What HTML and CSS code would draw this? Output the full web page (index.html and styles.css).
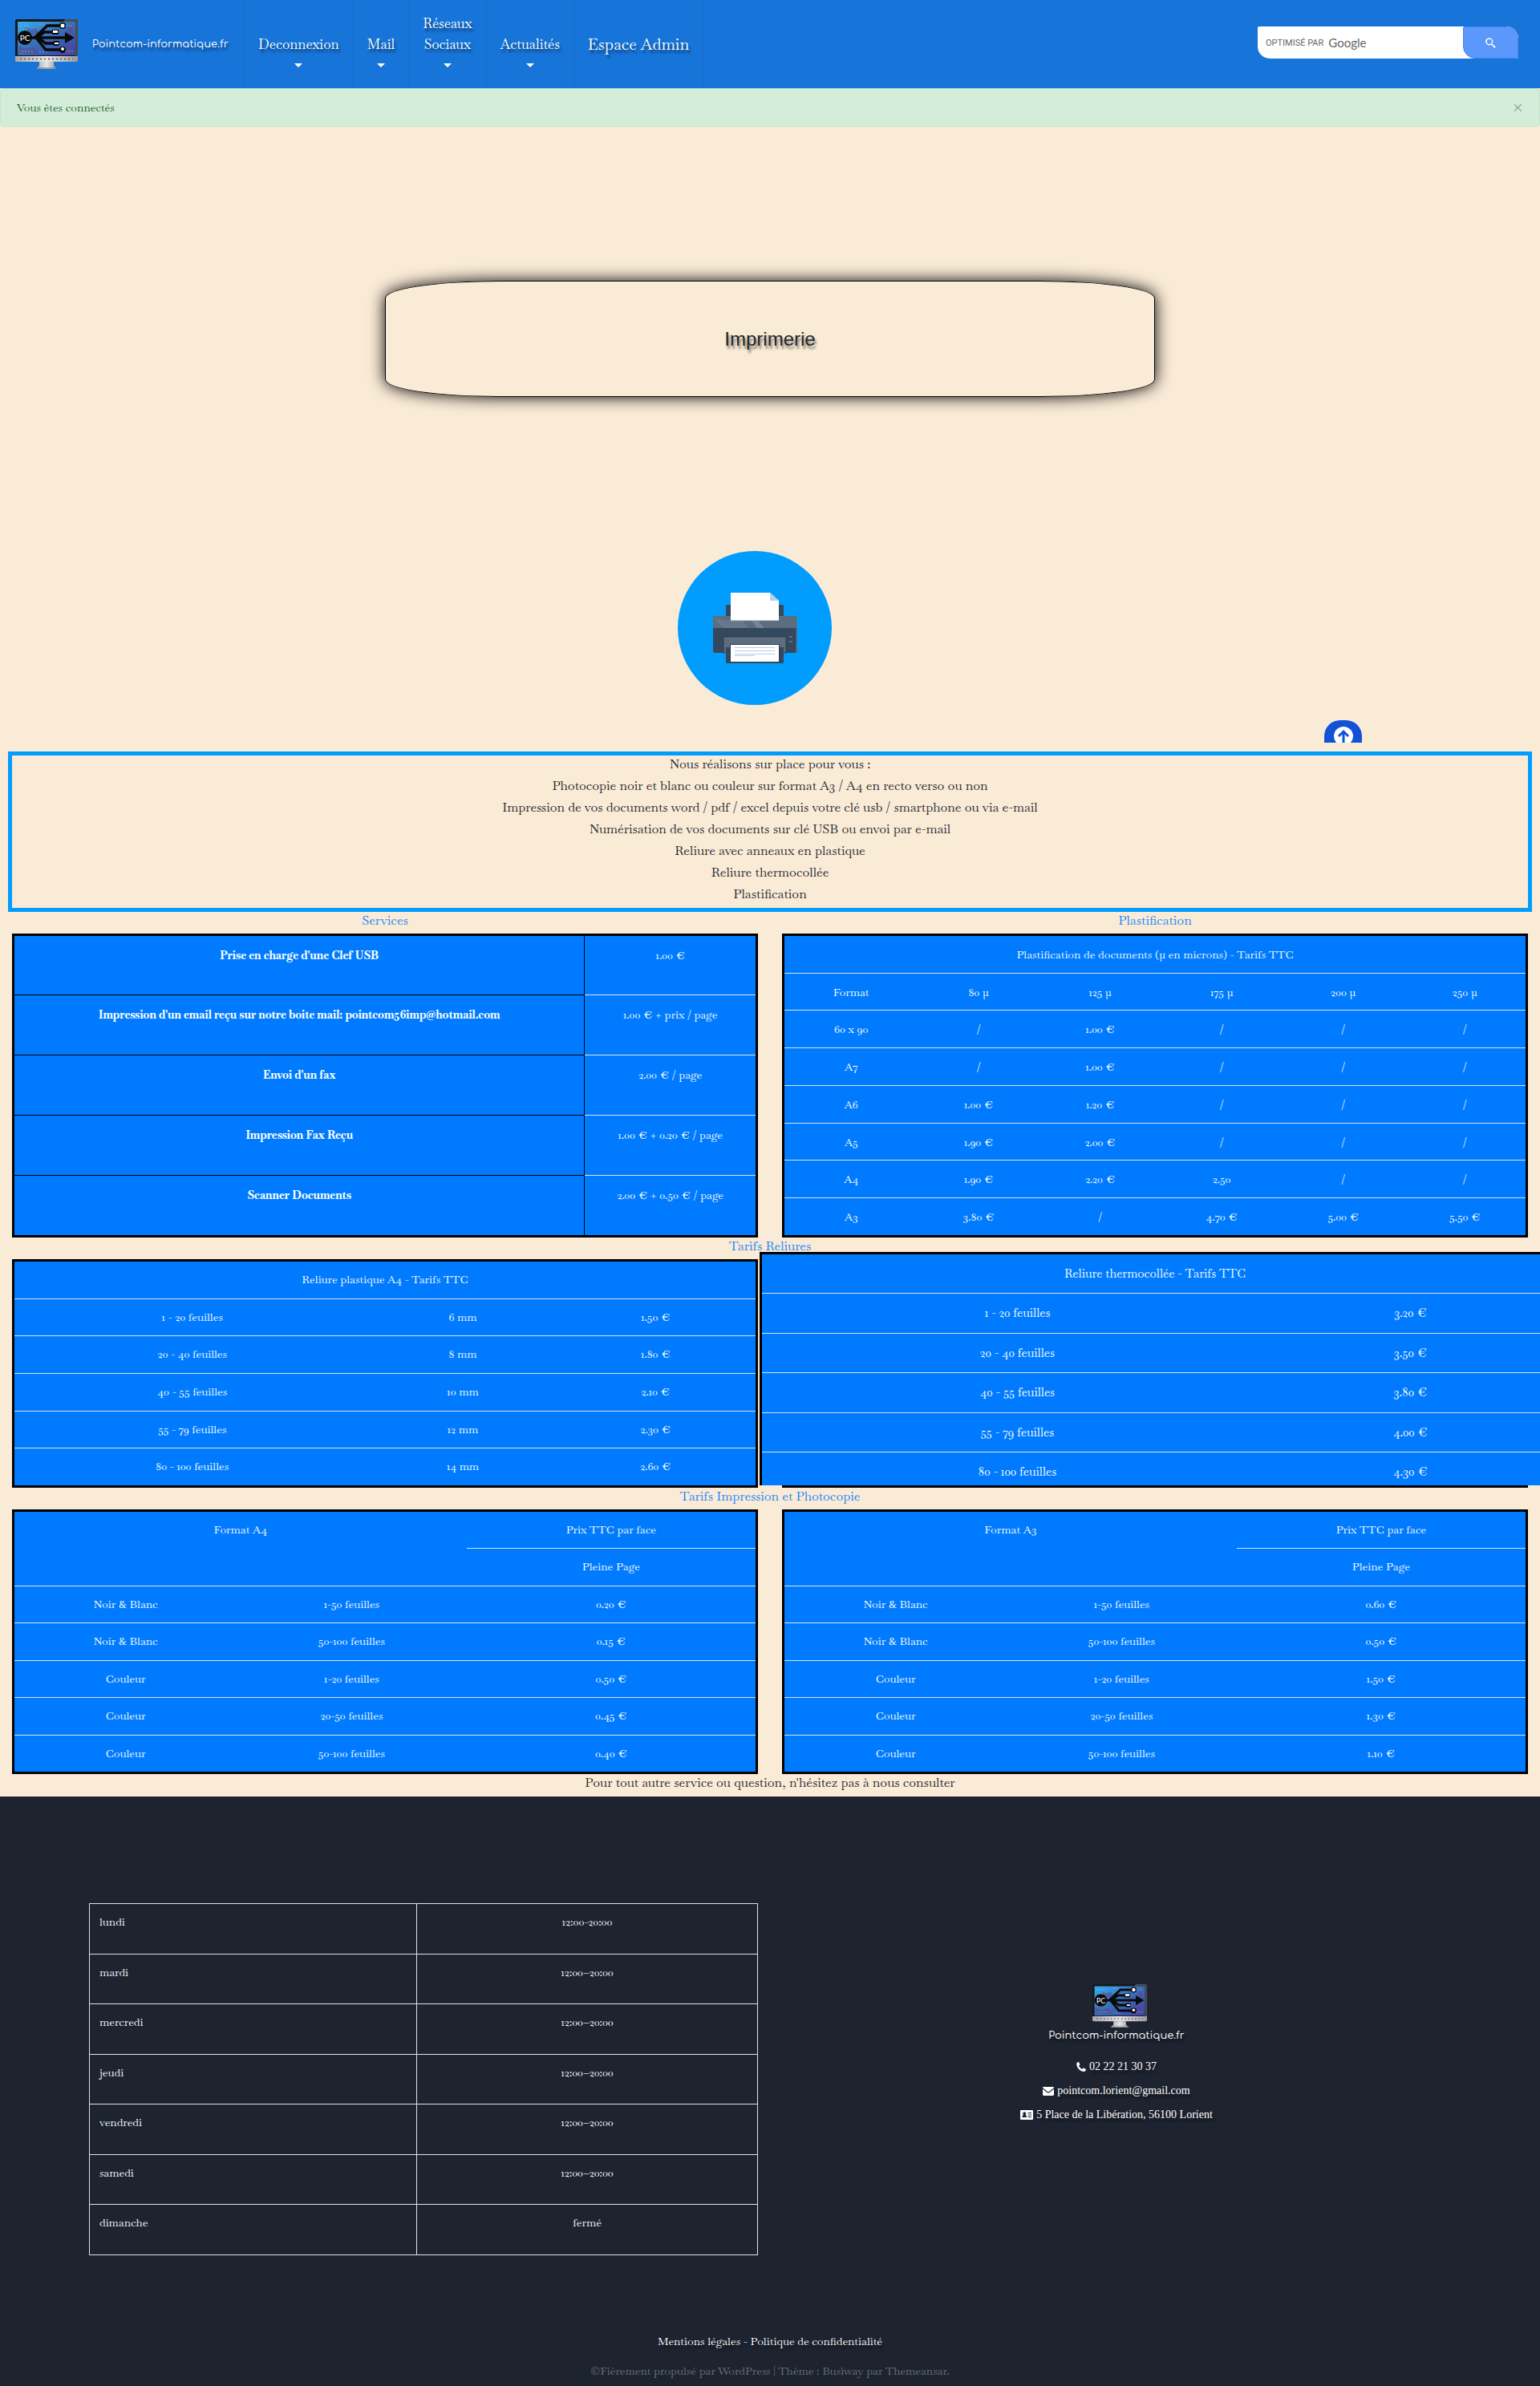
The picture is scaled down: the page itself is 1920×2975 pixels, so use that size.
FILE: index.html
```html
<!DOCTYPE html>
<html lang="fr">
<head>
<meta charset="utf-8">
<meta name="viewport" content="width=device-width, initial-scale=1">
<title>Imprimerie - Pointcom-informatique.fr</title>
<link rel="stylesheet" href="styles.css">
</head>
<body>
<svg class="defs" width="0" height="0" aria-hidden="true">
  <defs>
    <linearGradient id="screen" x1="0" y1="0" x2="1" y2="1">
      <stop offset="0" stop-color="#35aef0"/><stop offset=".5" stop-color="#3a6db5"/><stop offset="1" stop-color="#3f3fa8"/>
    </linearGradient>
    <linearGradient id="metal" x1="0" y1="0" x2="1" y2="0">
      <stop offset="0" stop-color="#a9a9ab"/><stop offset=".5" stop-color="#e6e6e8"/><stop offset="1" stop-color="#9b9b9e"/>
    </linearGradient>
    <symbol id="logo" viewBox="0 0 78 62" preserveAspectRatio="none">
      <rect x="0" y="0" width="78" height="48" rx="2" fill="#16181c"/>
      <path d="M62 0h14a2 2 0 0 1 2 2v44H75V3H60z" fill="#4a4c50"/>
      <rect x="3" y="3" width="72" height="42" fill="url(#screen)"/>
      <path d="M4 33l10 4 8-3 6 8H4zM12 10l8 3 6-2 4 6-9 3zM64 10h8v8h-6zM64 32l8 3v8H60z" fill="#5a4a8c" opacity=".6"/>
      <path d="M7 8h12M9 13h8M30 6h8M60 8h12M62 40h10M30 41h12M8 40h14" stroke="#7fd0ff" stroke-width="1" stroke-dasharray="2 2" opacity=".7"/>
      <path d="M16 23H66M24 23L40 8H58M26 23L38 38H58M27 23L36 16H50M28 23L38 30H50" fill="none" stroke="#0a0a0c" stroke-width="3.5"/>
      <path d="M62 16l12 7-12 7z" fill="#0a0a0c"/>
      <circle cx="12" cy="23" r="9" fill="#0a0a0c"/>
      <circle cx="59" cy="8" r="4" fill="#0a0a0c"/><circle cx="59" cy="8" r="2.5" fill="#fff"/>
      <rect x="46" y="13" width="8" height="6" fill="#0a0a0c"/><rect x="47" y="14" width="6" height="3" fill="#fff"/>
      <rect x="47" y="27" width="8" height="6" rx="2" fill="#0a0a0c"/><rect x="49" y="29" width="5" height="2" fill="#fff"/>
      <circle cx="59" cy="38" r="4" fill="#0a0a0c"/><circle cx="59" cy="37" r="2" fill="#fff"/>
      <text x="12" y="27" font-family="Lato, sans-serif" font-size="10" text-anchor="middle" fill="#fff">PC</text>
      <path d="M0 46h78v5a2 2 0 0 1-2 2H2a2 2 0 0 1-2-2z" fill="url(#metal)"/>
      <path d="M6 49.500h66" stroke="#55565a" stroke-width="1.500" stroke-dasharray="2 3"/>
      <path d="M30 53h18v5l4 4H26l4-4z" fill="url(#metal)"/>
      <path d="M26 61h26" stroke="#6b6c70"/>
    </symbol>
  </defs>
</svg>

<header class="topbar">
  <a class="brand" href="#">
    <svg class="brand-logo" aria-hidden="true"><use href="#logo"/></svg>
    <span class="brand-name">Pointcom-informatique.fr</span>
  </a>
  <nav class="menu">
    <a class="menu-item" href="#"><span>Deconnexion</span><i class="caret"></i></a>
    <a class="menu-item" href="#"><span>Mail</span><i class="caret"></i></a>
    <a class="menu-item" href="#"><span>Réseaux<br>Sociaux</span><i class="caret"></i></a>
    <a class="menu-item" href="#"><span>Actualités</span><i class="caret"></i></a>
    <a class="menu-item menu-admin" href="#">Espace Admin</a>
  </nav>
  <form class="search">
    <label class="search-field"><span class="search-by">OPTIMISÉ PAR</span><span class="search-brand">Google</span><input type="text" aria-label="Recherche"></label>
    <button class="search-button" type="button" aria-label="Rechercher">
      <svg width="13" height="13" viewBox="0 0 13 13"><path d="M4.800.2a4.600 4.600 0 1 0 2.800 8.200l.4.400v.7l3.500 3.500 1.300-1.300-3.500-3.500h-.8l-.4-.4A4.600 4.600 0 0 0 4.800.2zm0 1.500a3.100 3.100 0 1 1 0 6.200 3.100 3.100 0 0 1 0-6.200z" fill="#fff"/></svg>
    </button>
  </form>
</header>

<div class="alert" role="alert">
  <span>Vous êtes connectés</span>
  <button class="alert-close" type="button" aria-label="Fermer">×</button>
</div>

<main>
  <section class="hero">
    <h1 class="hero-title">Imprimerie</h1>
  </section>

  <div class="picture">
    <svg width="192" height="192" viewBox="0 0 192 192" role="img" aria-label="Imprimante">
      <circle cx="96" cy="96" r="96" fill="#009dff"/>
      <rect x="60" y="67" width="72" height="24" rx="2" fill="#34495e"/>
      <rect x="44" y="81" width="104" height="46" rx="2" fill="#34495e"/>
      <path d="M46 81h100a2 2 0 0 1 2 2v13H44V83a2 2 0 0 1 2-2z" fill="#5d6d7e"/>
      <path d="M45 84l12 12h32l-8-9H66z" fill="#67788c"/>
      <path d="M92 87h8l8 9h-9z" fill="#75859a"/>
      <path d="M66 52h49l11 10v25H66z" fill="#fff"/>
      <path d="M115 52l11 10h-11z" fill="#b9d0ea"/>
      <path d="M66 87h60" stroke="#7f8c9b"/>
      <rect x="57" y="107" width="78" height="20" fill="#5d6d7e" stroke="#2c3e50"/>
      <rect x="60" y="120" width="72" height="20" rx="1" fill="#34495e"/>
      <path d="M65 116h62v22H65z" fill="#2c3e50"/>
      <path d="M66 117h60v21H66z" fill="#fff"/>
      <path d="M71 120.500h50M71 124.500h50M71 128.500h50M71 130.500h25" stroke="#b5cdea"/>
      <path d="M139 107h4M139 113h4" stroke="#5d6d7e" stroke-width="2"/>
      <path d="M148 83v43" stroke="#7b6258"/>
    </svg>
  </div>

  <div class="totop-row">
    <a class="totop" href="#" aria-label="Haut de page">
      <svg width="24" height="24" viewBox="0 0 24 24"><circle cx="12" cy="12" r="12" fill="#fff"/><path d="M12 20V6M6 12l6-6 6 6" fill="none" stroke="#1152d6" stroke-width="3"/></svg>
    </a>
  </div>

  <section class="intro">
    <p>Nous réalisons sur place pour vous :</p>
    <p>Photocopie noir et blanc ou couleur sur format A3 / A4 en recto verso ou non</p>
    <p>Impression de vos documents word / pdf / excel depuis votre clé usb / smartphone ou via e-mail</p>
    <p>Numérisation de vos documents sur clé USB ou envoi par e-mail</p>
    <p>Reliure avec anneaux en plastique</p>
    <p>Reliure thermocollée</p>
    <p>Plastification</p>
  </section>

  <div class="pair">
    <section>
      <h2 class="heading">Services</h2>
      <table class="prices services">
        <colgroup><col class="w77"><col></colgroup>
        <tr><th>Prise en charge d'une Clef USB</th><td>1.00 €</td></tr>
        <tr><th>Impression d'un email reçu sur notre boite mail: pointcom56imp@hotmail.com</th><td>1.00 € + prix / page</td></tr>
        <tr><th>Envoi d'un fax</th><td>2.00 € / page</td></tr>
        <tr><th>Impression Fax Reçu</th><td>1.00 € + 0.20 € / page</td></tr>
        <tr><th>Scanner Documents</th><td>2.00 € + 0.50 € / page</td></tr>
      </table>
    </section>
    <section>
      <h2 class="heading">Plastification</h2>
      <table class="prices rows8">
        <colgroup><col class="w18"><col><col><col><col><col></colgroup>
        <tr><td colspan="6">Plastification de documents (µ en microns) - Tarifs TTC</td></tr>
        <tr><td>Format</td><td>80 µ</td><td>125 µ</td><td>175 µ</td><td>200 µ</td><td>250 µ</td></tr>
        <tr><td>60 x 90</td><td>/</td><td>1.00 €</td><td>/</td><td>/</td><td>/</td></tr>
        <tr><td>A7</td><td>/</td><td>1.00 €</td><td>/</td><td>/</td><td>/</td></tr>
        <tr><td>A6</td><td>1.00 €</td><td>1.20 €</td><td>/</td><td>/</td><td>/</td></tr>
        <tr><td>A5</td><td>1.90 €</td><td>2.00 €</td><td>/</td><td>/</td><td>/</td></tr>
        <tr><td>A4</td><td>1.90 €</td><td>2.20 €</td><td>2.50</td><td>/</td><td>/</td></tr>
        <tr><td>A3</td><td>3.80 €</td><td>/</td><td>4.70 €</td><td>5.00 €</td><td>5.50 €</td></tr>
      </table>
    </section>
  </div>

  <h2 class="heading">Tarifs Reliures</h2>
  <div class="pair">
    <table class="prices rows6">
      <colgroup><col class="w48"><col class="w25"><col></colgroup>
      <tr><td colspan="3">Reliure plastique A4 - Tarifs TTC</td></tr>
      <tr><td>1 - 20 feuilles</td><td>6 mm</td><td>1.50 €</td></tr>
      <tr><td>20 - 40 feuilles</td><td>8 mm</td><td>1.80 €</td></tr>
      <tr><td>40 - 55 feuilles</td><td>10 mm</td><td>2.10 €</td></tr>
      <tr><td>55 - 79 feuilles</td><td>12 mm</td><td>2.30 €</td></tr>
      <tr><td>80 - 100 feuilles</td><td>14 mm</td><td>2.60 €</td></tr>
    </table>
    <div class="zoomed">
      <div class="zoomed-view">
        <table class="prices rows6">
          <colgroup><col class="w65"><col></colgroup>
          <tr><td colspan="2">Reliure thermocollée - Tarifs TTC</td></tr>
          <tr><td>1 - 20 feuilles</td><td>3.20 €</td></tr>
          <tr><td>20 - 40 feuilles</td><td>3.50 €</td></tr>
          <tr><td>40 - 55 feuilles</td><td>3.80 €</td></tr>
          <tr><td>55 - 79 feuilles</td><td>4.00 €</td></tr>
          <tr><td>80 - 100 feuilles</td><td>4.30 €</td></tr>
        </table>
      </div>
    </div>
  </div>

  <h2 class="heading">Tarifs Impression et Photocopie</h2>
  <div class="pair">
    <table class="prices rows7">
      <colgroup><col class="w30"><col class="w31"><col></colgroup>
      <tr><td colspan="2" rowspan="2">Format A4</td><td>Prix TTC par face</td></tr>
      <tr><td>Pleine Page</td></tr>
      <tr><td>Noir &amp; Blanc</td><td>1-50 feuilles</td><td>0.20 €</td></tr>
      <tr><td>Noir &amp; Blanc</td><td>50-100 feuilles</td><td>0.15 €</td></tr>
      <tr><td>Couleur</td><td>1-20 feuilles</td><td>0.50 €</td></tr>
      <tr><td>Couleur</td><td>20-50 feuilles</td><td>0.45 €</td></tr>
      <tr><td>Couleur</td><td>50-100 feuilles</td><td>0.40 €</td></tr>
    </table>
    <table class="prices rows7">
      <colgroup><col class="w30"><col class="w31"><col></colgroup>
      <tr><td colspan="2" rowspan="2">Format A3</td><td>Prix TTC par face</td></tr>
      <tr><td>Pleine Page</td></tr>
      <tr><td>Noir &amp; Blanc</td><td>1-50 feuilles</td><td>0.60 €</td></tr>
      <tr><td>Noir &amp; Blanc</td><td>50-100 feuilles</td><td>0.50 €</td></tr>
      <tr><td>Couleur</td><td>1-20 feuilles</td><td>1.50 €</td></tr>
      <tr><td>Couleur</td><td>20-50 feuilles</td><td>1.30 €</td></tr>
      <tr><td>Couleur</td><td>50-100 feuilles</td><td>1.10 €</td></tr>
    </table>
  </div>
  <p class="closing">Pour tout autre service ou question, n'hésitez pas à nous consulter</p>
</main>

<footer class="footer">
  <div class="footer-columns">
    <section>
      <h2 class="hours-title">Horaires</h2>
      <table class="hours">
        <colgroup><col class="w49"><col></colgroup>
        <tr><th>lundi</th><td>12:00-20:00</td></tr>
        <tr><th>mardi</th><td>12:00–20:00</td></tr>
        <tr><th>mercredi</th><td>12:00–20:00</td></tr>
        <tr><th>jeudi</th><td>12:00–20:00</td></tr>
        <tr><th>vendredi</th><td>12:00–20:00</td></tr>
        <tr><th>samedi</th><td>12:00–20:00</td></tr>
        <tr><th>dimanche</th><td>fermé</td></tr>
      </table>
    </section>
    <address class="contact">
      <svg class="contact-logo" aria-hidden="true"><use href="#logo"/></svg>
      <span class="brand-name">Pointcom-informatique.fr</span>
      <ul class="contact-list">
        <li><svg width="12" height="12" viewBox="0 0 12 12" aria-hidden="true"><path d="M.2 2.200C.3 1.100 1.400.4 2.600.1c.4-.1.600.2.700.5l1 2.500c.1.300 0 .5-.2.700L3 4.800C3.900 6.600 5.300 8 7.200 9l1-1.200c.2-.2.500-.3.800-.2l2.500 1.100c.3.200.5.400.4.800-.4 1.700-1.200 2.400-2.300 2.400C5 11.900.1 7.200.2 2.200z" fill="#fff"/></svg><a href="#">02 22 21 30 37</a></li>
        <li><svg width="14" height="11" viewBox="0 0 14 11" aria-hidden="true"><path d="M0 1.200C0 .5.500 0 1.200 0h11.600c.7 0 1.200.5 1.200 1.200L8 6c-.7.500-1.300.5-2 0zM0 2.700l5.400 4.200c1 .8 2.200.8 3.200 0L14 2.700v7.100c0 .7-.5 1.200-1.200 1.200H1.200C.5 11 0 10.500 0 9.800z" fill="#fff"/></svg><a href="#">pointcom.lorient@gmail.com</a></li>
        <li><svg width="16" height="12" viewBox="0 0 16 12" aria-hidden="true"><path d="M1 0h14a1 1 0 0 1 1 1v10a1 1 0 0 1-1 1H1a1 1 0 0 1-1-1V1a1 1 0 0 1 1-1zm1.500 9h5.500c0-2-.8-2.800-1.600-3a2 2 0 1 0-2.300 0C3.300 6.200 2.500 7 2.500 9zM9.500 3v1H14V3zm0 2.500v1H14v-1zm0 2.500v1H14V8z" fill="#fff" fill-rule="evenodd"/></svg><span>5 Place de la Libération, 56100 Lorient</span></li>
      </ul>
    </address>
  </div>
  <p class="legal"><a href="#">Mentions légales</a> - <a href="#">Politique de confidentialité</a></p>
  <p class="credits">©Fièrement propulsé par WordPress | Thème : Busiway par Themeansar.</p>
</footer>
</body>
</html>
```
FILE: styles.css
```css
*, *::before, *::after { box-sizing: border-box; }
html { overflow-x: clip; }
body {
  margin: 0;
  overflow-x: clip;
  background: #faebd7;
  color: #212529;
  font-family: Baskervville, "Liberation Serif", "Times New Roman", serif;
  font-size: 14px;
  line-height: 27px;
}
p, h1, h2, ul { margin: 0; padding: 0; font-weight: 400; }
a { color: inherit; text-decoration: none; }
.defs { display: block; }

/* top bar */
.topbar { display: flex; align-items: center; min-height: 110px; padding-right: 27px; background: #1775d9; color: #fff; }
.brand { display: flex; align-items: center; gap: 18px; padding-left: 19px; width: 304px; }
.brand-logo { flex: none; width: 78px; height: 62px; }
.brand-name { font-family: Comfortaa, Lato, sans-serif; font-size: 13px; line-height: 20px; color: #fff; text-shadow: 2px 4px 3px rgba(0, 0, 0, .5); white-space: nowrap; }
.menu { display: flex; align-self: stretch; border-left: 1px solid #1a6cca; }
.menu-item {
  display: flex; flex-direction: column; justify-content: flex-end; align-items: center;
  padding: 0 17px 16px; border-right: 1px solid #1a6cca;
  font-size: 17px; line-height: 26px; text-align: center; text-shadow: 2px 4px 3px rgba(0, 0, 0, .5);
}
.menu-admin { justify-content: center; padding-bottom: 0; font-size: 20px; }
.caret { display: flex; align-items: center; height: 26px; }
.caret::before { content: ""; border: 5px solid transparent; border-top-color: #fff; border-bottom: 0; }
.search { display: flex; width: 325px; height: 40px; margin: 0 0 4px auto; border-radius: 2px 15px 2px 15px; background: #fff; overflow: hidden; }
.search-field { flex: 1; min-width: 0; display: flex; align-items: center; padding-left: 10px; font-family: Roboto, sans-serif; color: #666; }
.search-by { font-size: 11px; white-space: nowrap; }
.search-brand { margin-left: 6px; font-family: Lato, sans-serif; font-size: 15px; }
.search-field input { flex: 1; width: 0; min-width: 0; border: 0; outline: 0; background: none; }
.search-button { flex: none; display: flex; align-items: center; justify-content: center; width: 69px; border: 1px solid #4a83ee; border-radius: 2px 15px 2px 15px; background: #5c97fb; padding: 0; }

.alert { display: flex; justify-content: space-between; align-items: center; height: 48px; padding: 0 20px; border: 1px solid #c3e6cb; border-radius: 4px; background: #d4edda; color: #155724; }
.alert-close { padding: 0; border: 0; background: none; color: #7fa98a; font: 24px/24px "Liberation Serif", serif; }

/* title */
.hero { display: flex; justify-content: center; padding: 192px 0; }
.hero-title {
  display: flex; align-items: center; justify-content: center; width: 50%; height: 145px;
  border: 1px solid #000; border-radius: 15%; box-shadow: 0 0 20px #000;
  font-family: "Liberation Sans", Arial, sans-serif; font-size: 24px; line-height: 29px; text-shadow: 2px 4px 3px rgba(0, 0, 0, .5);
}
.picture { display: flex; justify-content: center; padding-right: 38px; }
.totop-row { display: flex; justify-content: flex-end; height: 58px; padding: 19px 222px 11px 0; }
.totop { display: flex; justify-content: center; width: 47px; padding-top: 8px; border-radius: 20px 20px 0 0; background: #1152d6; overflow: hidden; }
.totop svg { flex: none; }

.intro { display: flex; flex-direction: column; gap: 6px; margin: 0 10px; padding-bottom: 7px; border: 5px solid #009dff; text-align: center; font-size: 16px; line-height: 21px; }
.heading { padding-bottom: 6px; color: #1482fa; font-size: 16px; line-height: 21px; text-align: center; }
.pair { display: grid; grid-template-columns: 1fr 1fr; gap: 30px; padding: 0 15px; }
.closing { padding-bottom: 7px; text-align: center; font-size: 16px; line-height: 21px; }

/* price tables */
.prices { width: 100%; border: 3px solid #000; border-spacing: 0; table-layout: fixed; background: #007bff; color: #fff; text-align: center; line-height: 22px; }
.prices td, .prices th { padding: 11px 12px; border-top: 1px solid #dee2e6; vertical-align: top; }
.prices tr:first-child > * { border-top: 0; }
.rows8 { height: 379px; }
.rows8 td { padding: 12px 12px 11px; }
.rows7 { height: 330px; }
.rows6 { height: 285px; }
.services { height: 379px; }
.services th { border-top-color: #000; border-right: 1px solid #000; }
.services td, .services th { padding: 13px 12px; }
.w77 { width: 77%; } .w65 { width: 65%; } .w49 { width: 49%; } .w48 { width: 48%; }
.w31 { width: 31%; } .w30 { width: 30%; } .w25 { width: 25%; } .w18 { width: 18%; }

/* enlarged table, cut at the bottom edge of its frame */
.zoomed { border-bottom: 3px solid #000; }
.zoomed-view { display: flow-root; height: 282px; clip-path: inset(-9px -28px 0 -28px); }
.zoomed .prices { width: calc(100% + 56px); height: 302px; margin: -9px -28px 0; font-size: 15px; }
.zoomed .prices td { padding: 13px 12px 11px; }

/* footer */
.footer { padding: 90px 15px 6px; background: #1e2330; color: #fff; text-align: center; }
.footer-columns { display: grid; grid-template-columns: 1fr 1fr; gap: 30px; align-items: center; padding: 0 96px; }
.hours-title { color: #212529; font-size: 24px; line-height: 43px; text-align: left; }
.hours { width: 100%; height: 439px; border-collapse: collapse; table-layout: fixed; line-height: 22px; }
.hours th, .hours td { padding: 11px 12px; border: 1px solid #dee2e6; font-weight: 400; vertical-align: top; }
.hours th { text-align: left; }
.contact { display: flex; flex-direction: column; align-items: center; padding-bottom: 16px; font-style: normal; }
.contact-logo { width: 68px; height: 54px; margin-left: 8px; }
.contact-list { list-style: none; font-family: "Liberation Serif", "Times New Roman", serif; font-size: 14px; line-height: 30px; margin-top: 14px; }
.contact-list li { display: flex; align-items: center; justify-content: center; gap: 4px; text-shadow: 2px 4px 3px rgba(0, 0, 0, .5); }
.legal { margin-top: 94px; text-shadow: 2px 4px 3px rgba(0, 0, 0, .5); }
.credits { margin-top: 10px; color: #6c757d; }
```
